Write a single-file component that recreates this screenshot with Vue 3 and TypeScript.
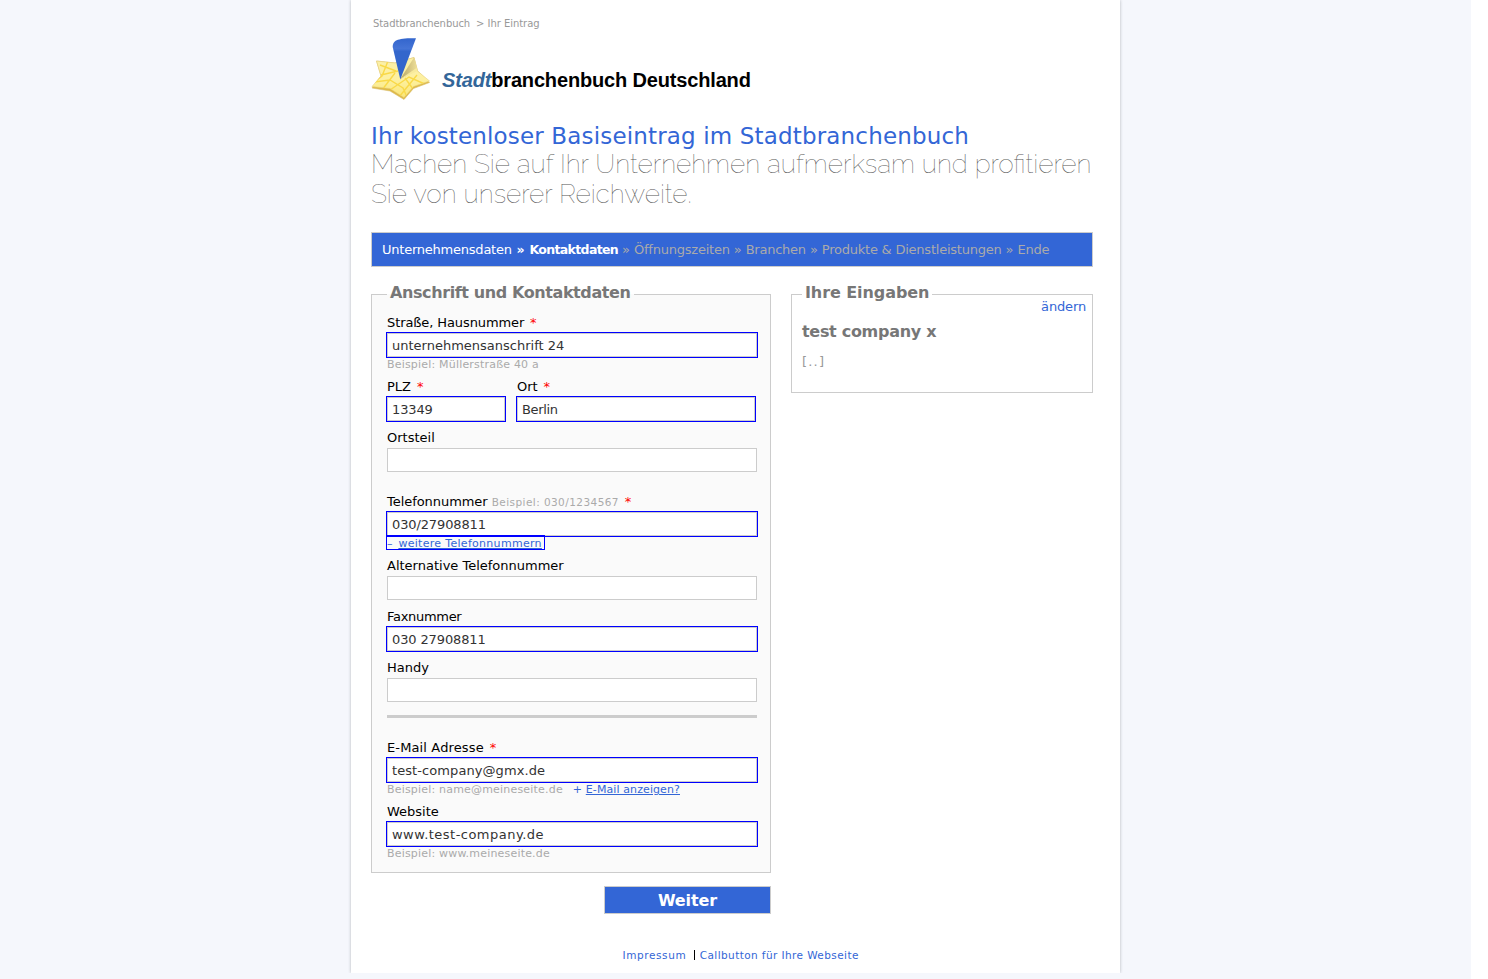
<script setup lang="ts">
interface Step { label: string; state: 'done' | 'current' | 'next' }

const steps: Step[] = [
  { label: 'Unternehmensdaten', state: 'done' },
  { label: 'Kontaktdaten', state: 'current' },
  { label: 'Öffnungszeiten', state: 'next' },
  { label: 'Branchen', state: 'next' },
  { label: 'Produkte & Dienstleistungen', state: 'next' },
  { label: 'Ende', state: 'next' },
]
</script>

<template>
  <div class="page">
    <main class="sheet">
      <nav class="crumbs"><span class="c1">Stadtbranchenbuch</span><span class="c2">&gt; Ihr Eintrag</span></nav>

      <header class="brand">
        <svg class="logo" width="62" height="66" viewBox="0 0 62 66">
          <defs>
            <linearGradient id="gold" x1="0" y1="0" x2="0" y2="1">
              <stop offset="0" stop-color="#fbf0a8" />
              <stop offset="0.55" stop-color="#fdf0a0" />
              <stop offset="1" stop-color="#fae678" />
            </linearGradient>
            <linearGradient id="fold" x1="0" y1="0" x2="1" y2="0">
              <stop offset="0" stop-color="#b9a765" />
              <stop offset="1" stop-color="#efe09a" />
            </linearGradient>
            <linearGradient id="cone" x1="0" y1="0" x2="0" y2="1">
              <stop offset="0" stop-color="#3365cd" />
              <stop offset="0.25" stop-color="#4574d6" />
              <stop offset="0.32" stop-color="#3366cc" />
              <stop offset="1" stop-color="#3366cc" />
            </linearGradient>
            <clipPath id="starClip"><path d="M5.500 24 L24 26 L43 20.500 L46.500 34 L58.500 44 L42.500 49.500 L33 60.500 L19 51.500 L1 49.500 L10 39 Z" /></clipPath>
          </defs>
          <path d="M5.500 24 L24 26 L43 20.500 L46.500 34 L58.500 45.500 L42.500 51.500 L33 62.500 L19 54 L1 51 L10 39 Z" fill="#dfb944" stroke="#d9bf72" stroke-width="0.6" stroke-linejoin="round" />
          <path d="M5.500 24 L24 26 L43 20.500 L46.500 34 L58.500 44 L42.500 49.500 L33 60.500 L19 51.500 L1 49.500 L10 39 Z" fill="url(#gold)" stroke="#e8d282" stroke-width="0.6" stroke-linejoin="round" />
          <g clip-path="url(#starClip)" fill="none" stroke="#f9d948" stroke-width="1.400">
            <path d="M10 38 L27 34 M17 24 L11 39 L2 46 M3 45 L19 43 L32 51 L36 60 M11 53 L24 36 M19 53 L38 40 L56 48 M34 41 L42 52 M28 60 L46 38 M9 28 L25 34" />
          </g>
          <path d="M29.300 42 L43 20.500 L46.500 33 Z" fill="url(#fold)" />
          <path d="M29.300 42 L45.500 31 L46.500 34 Z" fill="#f8ea9b" />
          <path d="M21.700 10 C21.700 3.500 26 1 45 1.300 L29.300 42.500 Z" fill="url(#cone)" />
        </svg>
        <div class="wordmark"><i>Stadt</i>branchenbuch Deutschland</div>
      </header>

      <h1>Ihr kostenloser Basiseintrag im Stadtbranchenbuch</h1>
      <h2>Machen Sie auf Ihr Unternehmen aufmerksam und profitieren<br>Sie von unserer Reichweite.</h2>

      <div class="steps">
        <template v-for="(s, i) in steps" :key="s.label"><span v-if="i" :class="['sep', s.state]">»</span><span :class="s.state">{{ s.label }}</span></template>
      </div>

      <div class="columns">
        <form class="form" @submit.prevent>
          <fieldset class="box contact">
            <legend>Anschrift und Kontaktdaten</legend>

            <div class="field">
              <label class="street">Straße, Hausnummer <b>*</b></label>
              <input class="filled" type="text" value="unternehmensanschrift 24">
              <div class="under">Beispiel: Müllerstraße 40 a</div>
            </div>

            <div class="pair">
              <div class="field plz">
                <label>PLZ <b>*</b></label>
                <input class="filled number" type="text" value="13349">
              </div>
              <div class="field ort">
                <label>Ort <b>*</b></label>
                <input class="filled city" type="text" value="Berlin">
              </div>
            </div>

            <div class="field spaced">
              <label>Ortsteil</label>
              <input type="text">
            </div>

            <div class="field">
              <label class="phone">Telefonnummer <small>Beispiel: 030/1234567</small> <b>*</b></label>
              <input class="filled number" type="text" value="030/27908811">
              <div class="under"><a class="more">– <u>weitere Telefonnummern</u></a></div>
            </div>

            <div class="field">
              <label>Alternative Telefonnummer</label>
              <input type="text">
            </div>
            <div class="field">
              <label class="fax">Faxnummer</label>
              <input class="filled number" type="text" value="030 27908811">
            </div>
            <div class="field">
              <label>Handy</label>
              <input type="text">
            </div>

            <hr>

            <div class="field">
              <label class="mail">E-Mail Adresse <b>*</b></label>
              <input class="filled address" type="text" value="test-company@gmx.de">
              <div class="under">Beispiel: name@meineseite.de<a class="show">+ <u>E-Mail anzeigen?</u></a></div>
            </div>
            <div class="field">
              <label>Website</label>
              <input class="filled url" type="text" value="www.test-company.de">
              <div class="under">Beispiel: www.meineseite.de</div>
            </div>
          </fieldset>
          <button type="submit">Weiter</button>
        </form>

        <fieldset class="box summary">
          <legend>Ihre Eingaben</legend>
          <a class="edit">ändern</a>
          <h3>test company x</h3>
          <p>[..]</p>
        </fieldset>
      </div>

      <footer><a class="imp">Impressum</a><i></i><a class="cb">Callbutton für Ihre Webseite</a></footer>
    </main>
  </div>
</template>

<style>
body { background: #fff; overflow: hidden; }
</style>

<style scoped>
* { box-sizing: border-box; }
.page {
  width: 1471px;
  height: 979px;
  background: #f5f7fc;
  font-family: Verdana, "DejaVu Sans", sans-serif;
  font-size: 13px;
  color: #000;
  white-space: nowrap;
}
.sheet {
  width: 769px;
  height: 973px;
  margin-left: 351px;
  padding: 0 27px 0 20px;
  background: #fff;
  box-shadow: 0 0 3px #b4b6bc;
  clip-path: inset(0 -4px);
}
.crumbs { height: 37px; padding: 17px 0 0 2px; font-size: 10px; line-height: 13px; color: #999; }
.c1 { margin-right: 6px; letter-spacing: -0.08px; }
.c2 { letter-spacing: -0.05px; }
.brand { display: flex; height: 84px; }
.logo { flex: none; }
.wordmark {
  margin: 31px 0 0 9px;
  height: 24px;
  font: bold 20px/24px "Liberation Sans", Arial, sans-serif;
  letter-spacing: -0.16px;
}
.wordmark i { color: #369; }
h1 { margin: 0; height: 28px; padding-top: 1px; font-size: 23px; line-height: 29px; font-weight: 400; letter-spacing: 0.16px; color: #3366d6; }
h2 {
  margin: 0;
  height: 83px;
  font-family: Raleway, Lato, sans-serif;
  font-weight: 100;
  font-size: 26.350px;
  line-height: 30px;
  color: #555;
}
.steps {
  width: 722px;
  height: 35px;
  padding-left: 10px;
  border: 1px solid #ccc;
  background: #3366d6;
  line-height: 34px;
  letter-spacing: -0.23px;
}
.done, .current { color: #fff; }
.current { font-weight: 700; font-size: 12.500px; letter-spacing: -0.65px; }
.next { color: #aaa; }
.sep { margin: 0 4.200px 0 4px; }
.sep.current { margin: 0 5.500px 0 4.800px; }
.columns { display: flex; align-items: flex-start; gap: 20px; padding-top: 17px; }
.form { width: 400px; flex: none; }
.box { margin: 0; border: 1px solid #ccc; min-width: 0; }
.box legend { height: 21px; padding: 0 3px; font-size: 16px; line-height: 17px; font-weight: 700; color: #777; }
.contact { height: 589px; padding: 8px 13px 0 15px; background: #fafafa; }
.contact legend { letter-spacing: -0.4px; }
.summary legend { letter-spacing: -0.08px; }
.field { width: 370px; margin-bottom: 7px; }
.field label { display: block; height: 20px; line-height: 20px; }
.field b { margin-left: 1.800px; font-weight: 400; color: #f00; }
.field small { font-size: 10.500px; letter-spacing: 0.43px; color: #aaa; }
.street { letter-spacing: -0.1px; }
.phone { letter-spacing: -0.05px; }
.fax { letter-spacing: -0.3px; }
.mail { letter-spacing: 0.13px; }
.field input {
  display: block;
  width: 100%;
  height: 24px;
  padding: 0 4px;
  border: 1px solid #ccc;
  border-radius: 0;
  background: #fff;
  font: 13px Verdana, "DejaVu Sans", sans-serif;
  color: #333;
}
.field .filled { outline: 1px solid #00f; }
.field .city { letter-spacing: -0.35px; }
.field .number { letter-spacing: -0.12px; }
.field .address { letter-spacing: 0.08px; }
.field .url { letter-spacing: 0.48px; }
.under { height: 13px; font-size: 11px; line-height: 15px; letter-spacing: 0.19px; color: #aaa; }
.pair { display: flex; gap: 12px; }
.plz { width: 118px; }
.ort { width: 238px; }
.spaced { margin-bottom: 20px; }
.under a { color: #3366d6; }
.more { display: block; width: 157px; height: 13px; outline: 1px solid #00f; line-height: 16px; }
.more u { margin-left: 2px; letter-spacing: 0.3px; }
.show { margin-left: 10px; letter-spacing: 0.1px; }
hr { width: 370px; height: 3px; margin: 13px 0 20px; border: 0; background: #ccc; }
button {
  display: block;
  width: 167px;
  height: 28px;
  margin: 13px 0 0 auto;
  padding: 2px 0 0;
  border: 1px solid #ccc;
  border-radius: 0;
  background: #3366d6;
  color: #fff;
  font: bold 16px/24px Verdana, "DejaVu Sans", sans-serif;
  letter-spacing: -0.1px;
}
.summary { width: 302px; height: 109px; flex: none; padding: 0 6px 0 10px; }
.edit { display: block; height: 16px; margin-top: -6px; line-height: 16px; letter-spacing: -0.15px; text-align: right; color: #3366d6; }
h3 { margin: 7px 0 0; font-size: 16px; line-height: 20px; letter-spacing: -0.3px; color: #777; }
.summary p { margin: 12px 0 0; line-height: 16px; letter-spacing: 1.200px; color: #999; }
footer { display: flex; align-items: center; height: 14px; margin-top: 34px; padding-left: 251.500px; font-size: 10.500px; color: #3366d6; }
.imp { letter-spacing: 0.6px; }
.cb { letter-spacing: 0.41px; }
footer i { width: 1px; height: 10px; margin: 0 5px 0 7.500px; background: #000; }
</style>
